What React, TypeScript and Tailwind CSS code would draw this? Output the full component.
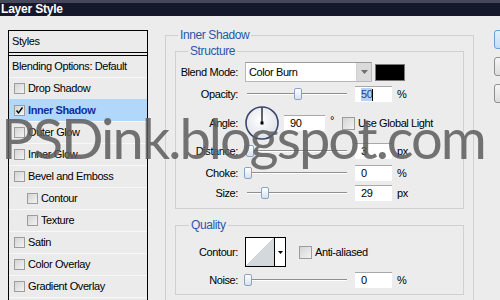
import React from "react";

const styleRows = [
  { label: "Drop Shadow" },
  { label: "Inner Shadow", checked: true, active: true },
  { label: "Outer Glow" },
  { label: "Inner Glow" },
  { label: "Bevel and Emboss" },
  { label: "Contour", indent: true },
  { label: "Texture", indent: true },
  { label: "Satin" },
  { label: "Color Overlay" },
  { label: "Gradient Overlay" },
  { label: "Stroke" },
];

function CheckBox({ checked = false, big = false }: { checked?: boolean; big?: boolean }) {
  return (
    <span
      className={`flex shrink-0 items-center justify-center border border-[#9d9d9d] bg-linear-to-br from-[#d4d4d4] to-[#f3f3f3] ${
        big ? "h-[13px] w-[13px]" : "h-[11px] w-[11px]"
      }`}
    >
      {checked && (
        <svg width="9" height="9" viewBox="0 0 9 9">
          <path d="M1.5 4.5 L3.5 6.8 L7.5 1.5" fill="none" stroke="#000" strokeWidth="1.4" />
        </svg>
      )}
    </span>
  );
}

function Slider({ pos }: { pos: number }) {
  return (
    <div className="relative h-[12px] w-[100px] shrink-0">
      <div className="absolute left-0 right-0 top-[5px] h-[2px] border-t border-[#8f8f8f] bg-white" />
      <div
        className="absolute top-0 h-[12px] w-[8px] rounded-[2px] border border-[#8ba3c3] bg-linear-to-b from-white to-[#d6e2ef]"
        style={{ left: pos - 4 }}
      />
    </div>
  );
}

function Field({ children, wide = false }: { children: React.ReactNode; wide?: boolean }) {
  return (
    <div
      className={`flex h-[16px] shrink-0 items-center border-t border-[#a8a8a8] bg-white pl-[6px] ${
        wide ? "w-[41px]" : "w-[37px]"
      }`}
    >
      {children}
    </div>
  );
}

function Label({ children }: { children: React.ReactNode }) {
  return <span className="w-[62px] shrink-0 text-right">{children}</span>;
}

function StyleList() {
  return (
    <div className="mt-[1px] h-[290px] w-[140px] shrink-0 border-x border-t border-black bg-[#ebebeb]">
      <div className="h-[22px] border-b border-black pl-[3px] leading-[21px]">Styles</div>
      <div className="mt-[2px] h-[22px] border-t border-black pl-[3px] leading-[21px]">
        Blending Options: Default
      </div>
      {styleRows.map((row) => (
        <div
          key={row.label}
          className={`flex h-[22px] items-center gap-[3px] border-t ${
            row.active ? "border-[#b1d7fb] bg-[#b1d7fb]" : "border-[#f8f8f8]"
          } ${row.indent ? "pl-[18px]" : "pl-[5px]"}`}
        >
          <CheckBox checked={row.checked} />
          <span className={row.active ? "font-bold text-[#0e2f9c]" : ""}>{row.label}</span>
        </div>
      ))}
    </div>
  );
}

function AngleDial() {
  return (
    <svg width="34" height="34" viewBox="0 0 34 34" className="ml-[7px] shrink-0">
      <defs>
        <radialGradient id="dial" cx="45%" cy="40%" r="60%">
          <stop offset="0%" stopColor="#ffffff" />
          <stop offset="100%" stopColor="#dfe2e8" />
        </radialGradient>
      </defs>
      <circle cx="17" cy="17" r="16" fill="url(#dial)" stroke="#3a4670" strokeWidth="1.6" />
      <line x1="17" y1="17" x2="17" y2="1.5" stroke="#000" strokeWidth="1.2" />
      <rect x="15.5" y="15.5" width="3" height="3" fill="#000" />
    </svg>
  );
}

export default function App() {
  return (
    <div className="relative h-[300px] w-[500px] overflow-hidden bg-[#ececec] font-['Liberation_Sans',Arial,sans-serif] text-[11px] tracking-[-0.4px] text-black">
      <div className="h-[16px] border-t-[3px] border-[#46475a] bg-[#15172b] pl-[1px] text-[12px] font-bold leading-[13px] tracking-[-0.2px] text-white">
        Layer Style
      </div>

      <div className="flex pl-[8px] pt-[13px]">
        <StyleList />

        <fieldset className="ml-[17px] w-[309px] shrink-0 border border-[#d0d0d0] px-[9px] pb-[20px]">
          <legend className="ml-[3px] px-[2px] text-[12px] leading-[13px] text-[#2858a8]">Inner Shadow</legend>

          {/* Structure */}
          <fieldset className="mt-[3px] border border-[#d0d0d0] pb-[7px]">
            <legend className="ml-[12px] px-[2px] text-[12px] leading-[13px] text-[#2858a8]">Structure</legend>
            <div className="flex flex-col pt-[4px]">
              <div className="flex h-[20px] items-center">
                <Label>Blend Mode:</Label>
                <div className="ml-[7px] flex h-[20px] w-[127px] border border-[#b8b8b8] border-t-[#9a9a9a] bg-white">
                  <span className="flex-1 pl-[3px] leading-[18px]">Color Burn</span>
                  <span className="flex w-[15px] items-center justify-center border-l border-[#cfcfcf] bg-[#dadada]">
                    <svg width="7" height="4" viewBox="0 0 7 4">
                      <path d="M0 0 L7 0 L3.5 4 Z" fill="#6f6f6f" />
                    </svg>
                  </span>
                </div>
                <div className="ml-[3px] h-[17px] w-[30px] border border-[#7a7a7a] bg-black" />
              </div>

              <div className="mt-[4px] flex h-[16px] items-center">
                <Label>Opacity:</Label>
                <div className="ml-[9px]">
                  <Slider pos={51} />
                </div>
                <div className="ml-[8px]">
                  <Field>
                    <span className="bg-[#b4d2f3] leading-[13px] text-[#1a3f96]">50</span>
                    <span className="h-[12px] w-[1px] bg-black" />
                  </Field>
                </div>
                <span className="ml-[5px]">%</span>
              </div>

              <div className="mt-[4px] flex h-[34px] items-center">
                <Label>Angle:</Label>
                <AngleDial />
                <div className="ml-[5px]">
                  <Field wide>90</Field>
                </div>
                <span className="ml-[5px] -mt-[6px]">°</span>
                <span className="ml-[8px]">
                  <CheckBox big />
                </span>
                <span className="ml-[3px]">Use Global Light</span>
              </div>

              <div className="mt-[3px] flex h-[16px] items-center">
                <Label>Distance:</Label>
                <div className="ml-[9px]">
                  <Slider pos={3} />
                </div>
                <div className="ml-[8px]">
                  <Field>3</Field>
                </div>
                <span className="ml-[5px]">px</span>
              </div>

              <div className="mt-[6px] flex h-[16px] items-center">
                <Label>Choke:</Label>
                <div className="ml-[9px]">
                  <Slider pos={1} />
                </div>
                <div className="ml-[8px]">
                  <Field>0</Field>
                </div>
                <span className="ml-[5px]">%</span>
              </div>

              <div className="mt-[4px] flex h-[16px] items-center">
                <Label>Size:</Label>
                <div className="ml-[9px]">
                  <Slider pos={18} />
                </div>
                <div className="ml-[8px]">
                  <Field>29</Field>
                </div>
                <span className="ml-[5px]">px</span>
              </div>
            </div>
          </fieldset>

          {/* Quality */}
          <fieldset className="mt-[10px] border border-[#d0d0d0] pb-[6px]">
            <legend className="ml-[13px] px-[2px] text-[12px] leading-[13px] text-[#2858a8]">Quality</legend>
            <div className="flex flex-col pt-[5px]">
              <div className="flex h-[30px] items-center">
                <Label>Contour:</Label>
                <div className="ml-[7px] flex h-[30px] w-[41px] border border-black bg-white">
                  <svg width="28" height="28" viewBox="0 0 28 28" className="shrink-0">
                    <polygon points="0,28 28,0 28,28" fill="#d3d8dd" />
                    <line x1="0" y1="28" x2="28" y2="0" stroke="#c4c9cf" strokeWidth="0.8" />
                  </svg>
                  <span className="flex flex-1 items-center justify-center border-l border-black">
                    <svg width="5" height="3" viewBox="0 0 5 3">
                      <path d="M0 0 L5 0 L2.5 3 Z" fill="#000" />
                    </svg>
                  </span>
                </div>
                <span className="ml-[13px]">
                  <CheckBox big />
                </span>
                <span className="ml-[3px]">Anti-aliased</span>
              </div>

              <div className="mt-[5px] flex h-[16px] items-center">
                <Label>Noise:</Label>
                <div className="ml-[9px]">
                  <Slider pos={1} />
                </div>
                <div className="ml-[8px]">
                  <Field>0</Field>
                </div>
                <span className="ml-[5px]">%</span>
              </div>
            </div>
          </fieldset>
        </fieldset>

        <div className="ml-[20px] mt-[1px] flex shrink-0 flex-col gap-[8px]">
          <div className="h-[19px] w-[60px] rounded-[3px] border border-[#6f9bd0] bg-linear-to-b from-[#e3f0fc] to-[#c3ddf7]" />
          <div className="h-[19px] w-[60px] rounded-[3px] border border-[#8f8f8f] bg-linear-to-b from-[#f6f6f6] to-[#dcdcdc]" />
          <div className="h-[19px] w-[60px] rounded-[3px] border border-[#8f8f8f] bg-linear-to-b from-[#f6f6f6] to-[#dcdcdc]" />
        </div>
      </div>

      {/* watermark */}
      <div className="pointer-events-none absolute left-[1px] top-[110px] whitespace-nowrap font-['Lato',sans-serif] text-[56px] leading-[56px] tracking-[-2px] text-[#5c5c5c]/85">
        PSDink.blogspot.com
      </div>
    </div>
  );
}
